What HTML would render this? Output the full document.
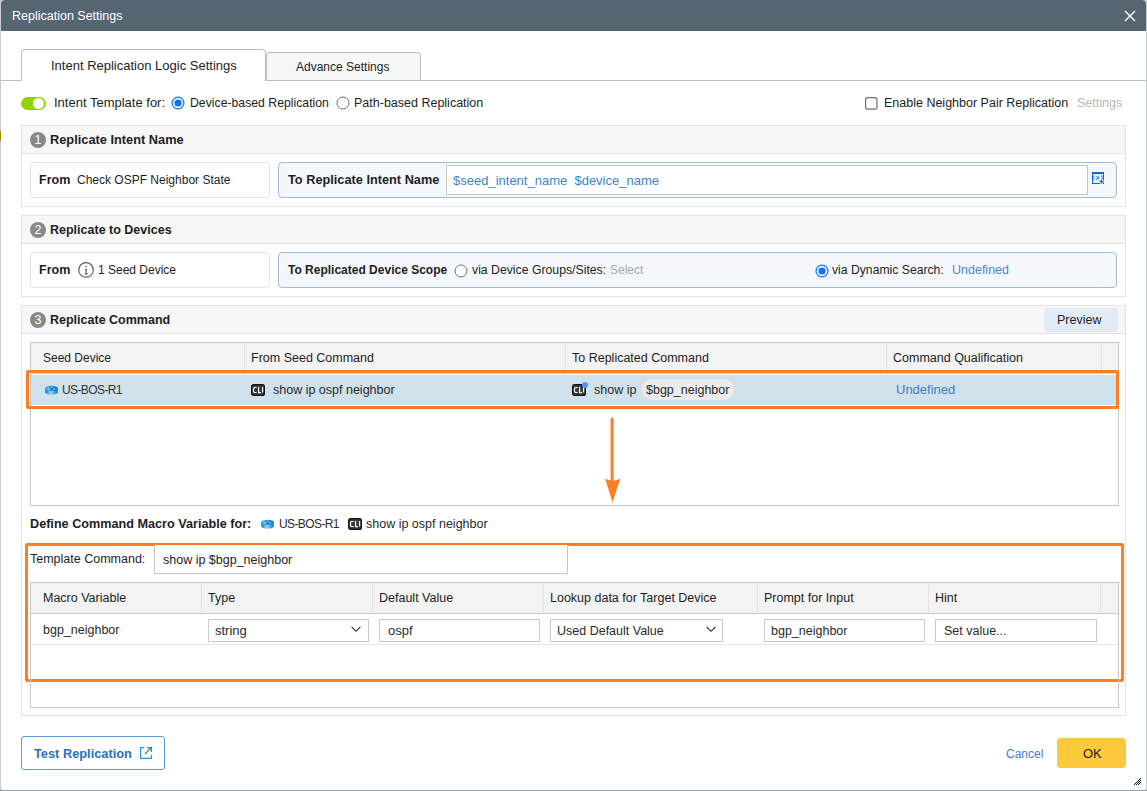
<!DOCTYPE html>
<html><head><meta charset="utf-8">
<style>
*{box-sizing:border-box;margin:0;padding:0}
html,body{width:1147px;height:791px;overflow:hidden;background:#c9cdd1;font-family:"Liberation Sans",sans-serif;color:#1e1e1e}
.dlg{position:absolute;left:1px;top:0;width:1145px;height:790px;background:#fff;border-radius:4px 4px 3px 3px;overflow:hidden}
.a{position:absolute}
.t{position:absolute;white-space:pre;font-size:12.5px;line-height:14px;color:#1e1e1e}
.b{font-weight:bold}
.bx{position:absolute;border:1px solid #c8c8c8}
.sec{position:absolute;left:20px;width:1105px;border:1px solid #e4e4e4;background:#fff}
.sech{position:absolute;left:0;top:0;width:100%;height:28px;background:#f7f7f7;border-bottom:1px solid #e4e4e4}
.num{position:absolute;left:8px;top:6px;width:16px;height:16px;border-radius:50%;background:#898989;color:#fff;font-size:12.5px;line-height:16px;text-align:center}
.card{position:absolute;border:1px solid #e3e3e3;border-radius:4px;background:#fff}
.cardb{position:absolute;border:1px solid #a2b9df;border-radius:4px;background:#f4f8fc}
.radio{position:absolute;width:13px;height:13px;border-radius:50%;border:1px solid #6f6f6f;background:#fff}
.radio.on{border:1.5px solid #1a73e8}
.radio.on:after{content:"";position:absolute;left:2px;top:2px;width:6px;height:6px;border-radius:50%;background:#1a73e8}
.th{position:absolute;background:#f3f3f3}
.sep{position:absolute;width:1px;background:#e2e2e2}
.inp{position:absolute;border:1px solid #c9c9c9;background:#fff;height:23px}
.orange{position:absolute;border:3px solid #fd7e24;border-radius:2px}
.chev{position:absolute;width:7px;height:7px;border-right:1.3px solid #333;border-bottom:1.3px solid #333;transform:rotate(45deg)}
.cli{position:absolute;width:14px;height:12px;background:#3a3a3a;border:1.5px solid #161616;border-radius:2.5px;color:#fff;font-size:8px;font-weight:bold;line-height:9px;text-align:center;letter-spacing:-0.3px}
</style></head><body>
<div class="a" style="left:0;top:790px;width:1147px;height:1px;background:#9aa1a6"></div>
<div class="a" style="left:0;top:131px;width:1px;height:10px;background:#b8860b"></div>
<div class="dlg">
  <!-- title bar -->
  <div class="a" style="left:0;top:0;width:1145px;height:31px;background:#556672"></div>
  <div class="t" style="left:11px;top:9px;color:#fff">Replication Settings</div>
  <svg class="a" style="left:1123px;top:10px" width="12" height="12" viewBox="0 0 12 12"><path d="M1 1L11 11M11 1L1 11" stroke="#fff" stroke-width="1.4"/></svg>

  <!-- tabs -->
  <div class="a" style="left:0;top:80px;width:1145px;height:1px;background:#b9bfc4"></div>
  <div class="a" style="left:265px;top:52px;width:155px;height:28px;background:#f6f7f7;border:1px solid #b9bfc4;border-bottom:none;border-radius:4px 4px 0 0"></div>
  <div class="a" style="left:20px;top:49px;width:245px;height:32px;background:#fff;border:1px solid #b9bfc4;border-bottom:none;border-radius:4px 4px 0 0"></div>
  <div class="t" style="left:50px;top:59px;font-size:13px">Intent Replication Logic Settings</div>
  <div class="t" style="left:295px;top:60px;font-size:12px">Advance Settings</div>

  <!-- option row -->
  <div class="a" style="left:20px;top:97px;width:25px;height:13px;border-radius:7px;background:#92d400"></div>
  <div class="a" style="left:32px;top:98px;width:11px;height:11px;border-radius:50%;background:#fff"></div>
  <div class="t" style="left:53px;top:96px;font-size:13px">Intent Template for:</div>
  <svg class="a" style="left:170.45px;top:96.3px" width="14" height="14" viewBox="0 0 14 14"><circle cx="7" cy="7" r="5.9" fill="#fff" stroke="#0a72ff" stroke-width="1.2"/><circle cx="7" cy="7" r="3.6" fill="#0a72ff"/></svg>
  <div class="t" style="left:189px;top:96px;font-size:12.25px">Device-based Replication</div>
  <svg class="a" style="left:335.45px;top:96.3px" width="14" height="14" viewBox="0 0 14 14"><circle cx="7" cy="7" r="6" fill="#fff" stroke="#707070" stroke-width="1"/></svg>
  <div class="t" style="left:353px;top:96px">Path-based Replication</div>
  <svg class="a" style="left:864.2px;top:97px" width="13" height="13" viewBox="0 0 13 13"><rect x="0.6" y="0.6" width="11.4" height="11.6" rx="2.2" fill="#fff" stroke="#717171" stroke-width="1.2"/></svg>
  <div class="t" style="left:883px;top:96px">Enable Neighbor Pair Replication</div>
  <div class="t" style="left:1076px;top:96px;color:#b8b8b8">Settings</div>

  <!-- section 1 -->
  <div class="sec" style="top:125px;height:82px">
    <div class="sech"></div>
    <div class="num" style="top:6px">1</div>
  </div>
  <div class="t b" style="left:49px;top:133px;font-size:12.8px">Replicate Intent Name</div>
  <div class="card" style="left:29px;top:162px;width:240px;height:36px"></div>
  <div class="t b" style="left:38px;top:173px">From</div>
  <div class="t" style="left:76px;top:173px;font-size:12px">Check OSPF Neighbor State</div>
  <div class="cardb" style="left:277px;top:162px;width:839px;height:36px"></div>
  <div class="t b" style="left:287px;top:173px;font-size:12.75px">To Replicate Intent Name</div>
  <div class="a" style="left:445px;top:165px;width:642px;height:30px;border:1px solid #c6c6c6;background:#fff"></div>
  <div class="t" style="left:452px;top:174px;font-size:13px;color:#3a87c9">$seed_intent_name  $device_name</div>
  <svg class="a" style="left:1091px;top:172px" width="12" height="12" viewBox="0 0 12 12"><rect x="0.55" y="0.55" width="10.9" height="10.9" stroke="#0f6ecd" stroke-width="1.1" fill="none"/><rect x="0" y="0" width="12" height="2.1" fill="#0f6ecd"/><path d="M2.5 3.4Q1.8 3.6 2 4.9Q1.9 5.5 1.4 5.8Q1.9 6.1 2 6.8Q1.8 8.1 2.5 8.3M9.3 3.4Q10 3.6 9.8 4.9Q9.9 5.5 10.4 5.8Q9.9 6.1 9.8 6.8Q10 8.1 9.3 8.3" stroke="#0f6ecd" stroke-width="0.9" fill="none"/><path d="M4.5 4.1L6.9 7.6M7.6 4.1L4 7.6" stroke="#0f6ecd" stroke-width="1"/><path d="M7.1 9.4H11.7M9.4 7.1V11.7" stroke="#fff" stroke-width="2.4"/><path d="M7.5 9.4H11.3M9.4 7.5V11.3" stroke="#0f6ecd" stroke-width="1.1"/></svg>

  <!-- section 2 -->
  <div class="sec" style="top:215px;height:82px">
    <div class="sech"></div>
    <div class="num">2</div>
  </div>
  <div class="t b" style="left:49px;top:223px">Replicate to Devices</div>
  <div class="card" style="left:29px;top:252px;width:240px;height:36px"></div>
  <div class="t b" style="left:38px;top:263px">From</div>
  <svg class="a" style="left:77px;top:262px" width="16" height="16" viewBox="0 0 16 16"><circle cx="8" cy="7.9" r="7.3" fill="none" stroke="#56646e" stroke-width="1.2"/><rect x="7.1" y="4" width="1.7" height="1" fill="#56646e"/><path d="M6.9 7.6H8.2V11.6M6.6 11.8H9.8" stroke="#56646e" stroke-width="1.15" fill="none"/></svg>
  <div class="t" style="left:97px;top:263px;font-size:12px">1 Seed Device</div>
  <div class="cardb" style="left:277px;top:252px;width:839px;height:36px"></div>
  <div class="t b" style="left:287px;top:263px;font-size:12px">To Replicated Device Scope</div>
  <svg class="a" style="left:453.4px;top:263.5px" width="14" height="14" viewBox="0 0 14 14"><circle cx="7" cy="7" r="6" fill="#fff" stroke="#707070" stroke-width="1"/></svg>
  <div class="t" style="left:471px;top:263px;font-size:12.25px">via Device Groups/Sites:</div>
  <div class="t" style="left:609px;top:263px;font-size:12px;color:#a8a8a8">Select</div>
  <svg class="a" style="left:813.5px;top:263.5px" width="14" height="14" viewBox="0 0 14 14"><circle cx="7" cy="7" r="5.9" fill="#fff" stroke="#0a72ff" stroke-width="1.2"/><circle cx="7" cy="7" r="3.6" fill="#0a72ff"/></svg>
  <div class="t" style="left:831px;top:263px;font-size:12.2px">via Dynamic Search:</div>
  <div class="t" style="left:951px;top:263px;font-size:12.5px;color:#4f86c6">Undefined</div>

  <!-- section 3 -->
  <div class="sec" style="top:305px;height:411px">
    <div class="sech"></div>
    <div class="num">3</div>
  </div>
  <div class="t b" style="left:49px;top:313px">Replicate Command</div>
  <div class="a" style="left:1043px;top:308px;width:74px;height:24px;background:#e3ebf7;border-radius:4px"></div>
  <div class="t" style="left:1056px;top:313px">Preview</div>

  <!-- table 1 -->
  <div class="bx" style="left:29px;top:342px;width:1089px;height:164px;background:#fff"></div>
  <div class="th" style="left:30px;top:343px;width:1087px;height:27px"></div>
  <div class="sep" style="left:243px;top:343px;height:61px"></div>
  <div class="sep" style="left:564px;top:343px;height:61px"></div>
  <div class="sep" style="left:885px;top:343px;height:61px"></div>
  <div class="sep" style="left:1100px;top:343px;height:27px"></div>
  <div class="t" style="left:42px;top:351px;font-size:12px">Seed Device</div>
  <div class="t" style="left:250px;top:351px">From Seed Command</div>
  <div class="t" style="left:571px;top:351px">To Replicated Command</div>
  <div class="t" style="left:892px;top:351px">Command Qualification</div>
  <div class="a" style="left:30px;top:375px;width:1086px;height:30px;background:#d1e1eb"></div>
  <div class="a" style="left:30px;top:373px;width:1086px;height:1px;background:#d3d3d3"></div>
  <div class="orange" style="left:25px;top:370px;width:1093px;height:39px"></div>
  <svg class="a" style="left:43.6px;top:385px" width="14" height="11" viewBox="0 0 14 11"><defs><linearGradient id="rb" x1="0" x2="1"><stop offset="0" stop-color="#1677d2"/><stop offset="0.45" stop-color="#86d8fc"/><stop offset="1" stop-color="#1276cc"/></linearGradient><linearGradient id="rt" x1="0" x2="1"><stop offset="0" stop-color="#2eb3f4"/><stop offset="1" stop-color="#0a70c9"/></linearGradient></defs><path d="M0.2 3.4V7.2A6.3 2.5 0 0 0 12.8 7.2V3.4Z" fill="url(#rb)"/><ellipse cx="6.5" cy="3.4" rx="6.3" ry="2.6" fill="url(#rt)"/><path d="M2.6 3.2h1.6M6.4 2.1h1.2M8.6 3.8h1.6M3.4 4.7h1" stroke="#fff" stroke-width="0.8"/></svg>
  <div class="t" style="left:61px;top:383px;color:#333;letter-spacing:-0.6px;font-size:12px">US-BOS-R1</div>
  <svg class="a" style="left:250px;top:384px" width="14" height="12" viewBox="0 0 14 12"><rect x="0.6" y="0.6" width="12.8" height="10.8" rx="2" fill="#3b3b3b" stroke="#141414" stroke-width="1.2"/><path d="M5.6 3.5H3.8Q2.4 3.5 2.4 6Q2.4 8.5 3.8 8.5H5.6M7.6 2.9V8.6H9.9M11.6 2.9V8.6" stroke="#fff" stroke-width="1.15" fill="none"/></svg>
  <div class="t" style="left:272px;top:383px;color:#2a2a2a">show ip ospf neighbor</div>
  <svg class="a" style="left:571px;top:384px" width="14" height="12" viewBox="0 0 14 12"><rect x="0.6" y="0.6" width="12.8" height="10.8" rx="2" fill="#3b3b3b" stroke="#141414" stroke-width="1.2"/><path d="M5.6 3.5H3.8Q2.4 3.5 2.4 6Q2.4 8.5 3.8 8.5H5.6M7.6 2.9V8.6H9.9M11.6 2.9V8.6" stroke="#fff" stroke-width="1.15" fill="none"/></svg>
  <div class="a" style="left:581px;top:382px;width:6px;height:6px;border-radius:50%;background:#4d95fc"></div>
  <div class="t" style="left:593px;top:383px;color:#2a2a2a">show ip</div>
  <div class="a" style="left:641px;top:379px;width:92px;height:21px;border-radius:10px;background:#ebebeb"></div>
  <div class="t" style="left:645px;top:383px;color:#2a2a2a">$bgp_neighbor</div>
  <div class="t" style="left:895px;top:383px;color:#3f80c2;font-size:13px">Undefined</div>

  <!-- arrow -->
  <svg class="a" style="left:599px;top:414px" width="26" height="92" viewBox="0 0 26 92"><path d="M12.1 5V70" stroke="#fd7e24" stroke-width="3" stroke-linecap="round"/><path d="M5.2 64.8L12.6 67.2L20.2 64.8L12.6 88.4Z" fill="#fd7e24"/></svg>

  <!-- define macro -->
  <div class="t b" style="left:29px;top:517px;font-size:12.65px">Define Command Macro Variable for:</div>
  <svg class="a" style="left:259.6px;top:518.5px" width="14" height="11" viewBox="0 0 14 11"><path d="M0.2 3.4V7.2A6.3 2.5 0 0 0 12.8 7.2V3.4Z" fill="url(#rb)"/><ellipse cx="6.5" cy="3.4" rx="6.3" ry="2.6" fill="url(#rt)"/><path d="M2.6 3.2h1.6M6.4 2.1h1.2M8.6 3.8h1.6M3.4 4.7h1" stroke="#fff" stroke-width="0.8"/></svg>
  <div class="t" style="left:278px;top:517px;color:#2a2a2a;letter-spacing:-0.6px;font-size:12px">US-BOS-R1</div>
  <svg class="a" style="left:347px;top:518px" width="14" height="12" viewBox="0 0 14 12"><rect x="0.6" y="0.6" width="12.8" height="10.8" rx="2" fill="#3b3b3b" stroke="#141414" stroke-width="1.2"/><path d="M5.6 3.5H3.8Q2.4 3.5 2.4 6Q2.4 8.5 3.8 8.5H5.6M7.6 2.9V8.6H9.9M11.6 2.9V8.6" stroke="#fff" stroke-width="1.15" fill="none"/></svg>
  <div class="t" style="left:365px;top:517px;color:#2a2a2a">show ip ospf neighbor</div>

  <div class="orange" style="left:24px;top:543px;width:1099px;height:139px"></div>
  <div class="t" style="left:29px;top:552px">Template Command:</div>
  <div class="a" style="left:153px;top:545px;width:414px;height:29px;border:1px solid #c6c6c6;border-top:none;background:#fff"></div>
  <div class="t" style="left:162px;top:553px">show ip $bgp_neighbor</div>

  <!-- table 2 -->
  <div class="bx" style="left:29px;top:582px;width:1089px;height:126px;background:transparent"></div>
  <div class="th" style="left:30px;top:583px;width:1087px;height:31px;border-bottom:1px solid #c8c8c8"></div>
  <div class="sep" style="left:200px;top:583px;height:30px"></div>
  <div class="sep" style="left:371px;top:583px;height:30px"></div>
  <div class="sep" style="left:542px;top:583px;height:30px"></div>
  <div class="sep" style="left:756px;top:583px;height:30px"></div>
  <div class="sep" style="left:927px;top:583px;height:30px"></div>
  <div class="sep" style="left:1099px;top:583px;height:30px"></div>
  <div class="a" style="left:30px;top:644px;width:1087px;height:1px;background:#e6e6e6"></div>
  <div class="t" style="left:42px;top:591px">Macro Variable</div>
  <div class="t" style="left:207px;top:591px">Type</div>
  <div class="t" style="left:378px;top:591px">Default Value</div>
  <div class="t" style="left:549px;top:591px">Lookup data for Target Device</div>
  <div class="t" style="left:763px;top:591px">Prompt for Input</div>
  <div class="t" style="left:934px;top:591px">Hint</div>

  <div class="t" style="left:42px;top:623px;color:#2a2a2a">bgp_neighbor</div>
  <div class="inp" style="left:207px;top:619px;width:161px"></div>
  <div class="t" style="left:214px;top:624px;color:#2a2a2a;font-size:13px">string</div>
  <svg class="a" style="left:350.4px;top:626px" width="11" height="7" viewBox="0 0 11 7"><path d="M0.6 0.8L5 5.3L9.4 0.8" fill="none" stroke="#2a2a2a" stroke-width="1.15"/></svg>
  <div class="inp" style="left:378px;top:619px;width:161px"></div>
  <div class="t" style="left:387px;top:624px;color:#2a2a2a;font-size:13px">ospf</div>
  <div class="inp" style="left:549px;top:619px;width:173px"></div>
  <div class="t" style="left:556px;top:624px;color:#2a2a2a">Used Default Value</div>
  <svg class="a" style="left:705.4px;top:626px" width="11" height="7" viewBox="0 0 11 7"><path d="M0.6 0.8L5 5.3L9.4 0.8" fill="none" stroke="#2a2a2a" stroke-width="1.15"/></svg>
  <div class="inp" style="left:763px;top:619px;width:161px"></div>
  <div class="t" style="left:770px;top:624px;color:#2a2a2a">bgp_neighbor</div>
  <div class="inp" style="left:934px;top:619px;width:162px"></div>
  <div class="t" style="left:943px;top:624px;color:#2a2a2a">Set value...</div>

  <!-- footer -->
  <div class="a" style="left:20px;top:736px;width:144px;height:34px;border:1px solid #5b9bd9;border-radius:3px"></div>
  <div class="t b" style="left:33px;top:747px;color:#2b71b8;font-size:12.8px">Test Replication</div>
  <svg class="a" style="left:138px;top:746px" width="14" height="14" viewBox="0 0 14 14"><path d="M5.2 1.6H1.6V12.4H12.4V8.8" fill="none" stroke="#2196f3" stroke-width="1.2"/><path d="M6 8L12 2M8 1.6H12.4V6" fill="none" stroke="#21a05a" stroke-width="1.2"/></svg>
  <div class="t" style="left:1005px;top:747px;font-size:12px;color:#3f7fc4">Cancel</div>
  <div class="a" style="left:1056px;top:738px;width:69px;height:30px;background:#fcc83c;border-radius:4px"></div>
  <div class="t" style="left:1082px;top:747px;font-size:13px;color:#222">OK</div>
  <svg class="a" style="left:1132px;top:777px" width="10" height="10" viewBox="0 0 10 10" shape-rendering="crispEdges" fill="#111"><rect x="7" y="1" width="1" height="1"/><rect x="6" y="2" width="1" height="1"/><rect x="5" y="3" width="1" height="1"/><rect x="7" y="3" width="1" height="1"/><rect x="4" y="4" width="1" height="1"/><rect x="6" y="4" width="1" height="1"/><rect x="3" y="5" width="1" height="1"/><rect x="5" y="5" width="1" height="1"/><rect x="7" y="5" width="1" height="1"/><rect x="2" y="6" width="1" height="1"/><rect x="4" y="6" width="1" height="1"/><rect x="6" y="6" width="1" height="1"/><rect x="1" y="7" width="1" height="1"/><rect x="3" y="7" width="1" height="1"/><rect x="5" y="7" width="1" height="1"/></svg>
</div>
</body></html>
